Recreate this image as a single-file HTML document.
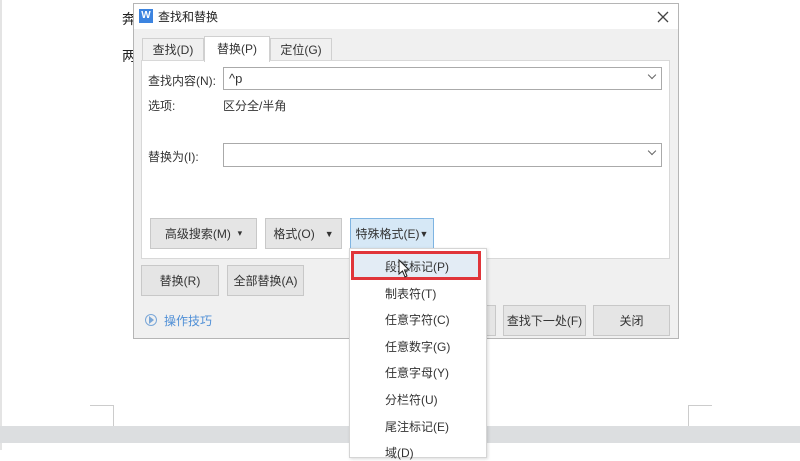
<!DOCTYPE html>
<html><head><meta charset="utf-8"><style>
*{margin:0;padding:0;box-sizing:border-box}
body{width:800px;height:450px;overflow:hidden;background:#fff;position:relative;font-family:"Liberation Sans","Noto Sans CJK SC",sans-serif;font-size:12px;color:#333}
.a{position:absolute}
.btn{position:absolute;background:#e5e5e5;border:1px solid #c8c8c8;display:flex;align-items:center;justify-content:center;color:#333;font-size:12px}
.inp{position:absolute;background:#fff;border:1px solid #aaa}
.chev{position:absolute;right:6px;top:4px;width:6px;height:6px;border-right:1.3px solid #666;border-bottom:1.3px solid #666;transform:rotate(45deg)}
.mi{position:absolute;left:35px;font-size:12px;color:#333}
</style></head><body>
<div class="a" style="left:0;top:0;width:2px;height:450px;background:#e4e4e4"></div>
<div class="a" style="left:122px;top:9px;font-size:14px;color:#222">奔</div>
<div class="a" style="left:122px;top:46px;font-size:14px;color:#222">两</div>
<div class="a" style="left:90px;top:405px;width:24px;height:21px;border-top:1px solid #ccc;border-right:1px solid #ccc"></div>
<div class="a" style="left:688px;top:405px;width:24px;height:21px;border-top:1px solid #ccc;border-left:1px solid #ccc"></div>
<div class="a" style="left:0;top:426px;width:800px;height:17px;background:#dcdee0"></div>

<!-- dialog -->
<div class="a" style="left:133px;top:3px;width:546px;height:336px;background:#f0f0f0;border:1px solid #b5b5b5">
  <div class="a" style="left:0;top:0;width:544px;height:25px;background:#fff"></div>
  <div class="a" style="left:5px;top:5px;width:14px;height:14px;background:#3c84e0;color:#fff;font-size:10px;line-height:14px;text-align:center;font-weight:bold">W</div>
  <div class="a" style="left:24px;top:4px;font-size:12px;color:#222">查找和替换</div>
  <svg class="a" style="left:523px;top:7px" width="12" height="12" viewBox="0 0 12 12"><path d="M1 1 L11 11 M11 1 L1 11" stroke="#444" stroke-width="1.3"/></svg>
  <!-- tabs -->
  <div class="a" style="left:8px;top:34px;width:62px;height:23px;border:1px solid #d0d0d0;border-bottom:none;background:#f0f0f0;text-align:center;line-height:22px">查找(D)</div>
  <div class="a" style="left:70px;top:32px;width:66px;height:26px;border:1px solid #d0d0d0;border-bottom:none;background:#fff;text-align:center;line-height:24px;z-index:2">替换(P)</div>
  <div class="a" style="left:136px;top:34px;width:62px;height:23px;border:1px solid #d0d0d0;border-bottom:none;background:#f0f0f0;text-align:center;line-height:22px">定位(G)</div>
  <div class="a" style="left:7px;top:56px;width:529px;height:199px;background:#fff;border:1px solid #d8d8d8"></div>
  <div class="a" style="left:14px;top:68px">查找内容(N):</div>
  <div class="inp" style="left:89px;top:63px;width:439px;height:23px"><span style="position:absolute;left:5px;top:3px;font-size:13px">^p</span><div class="chev"></div></div>
  <div class="a" style="left:14px;top:93px">选项:</div>
  <div class="a" style="left:89px;top:93px">区分全/半角</div>
  <div class="a" style="left:14px;top:144px">替换为(I):</div>
  <div class="inp" style="left:89px;top:139px;width:439px;height:24px"><div class="chev"></div></div>
  <div class="btn" style="left:16px;top:214px;width:107px;height:31px">高级搜索(M)&nbsp;&nbsp;<span style="font-size:9px">▾</span></div>
  <div class="btn" style="left:131px;top:214px;width:77px;height:31px">格式(O)&nbsp;&nbsp;&nbsp;<span style="font-size:9px">▼</span></div>
  <div class="btn" style="left:216px;top:214px;width:84px;height:31px;background:#d6e8f6;border-color:#7eb4e2">特殊格式(E)<span style="font-size:9px">▼</span></div>
  <div class="btn" style="left:7px;top:261px;width:78px;height:31px">替换(R)</div>
  <div class="btn" style="left:93px;top:261px;width:77px;height:31px">全部替换(A)</div>
  <div class="a" style="left:11px;top:310px;width:12px;height:12px;border:1px solid #7aa7d8;border-radius:50%"></div>
  <div class="a" style="left:15px;top:312px;width:0;height:0;border-left:5px solid #7aa7d8;border-top:4px solid transparent;border-bottom:4px solid transparent"></div>
  <div class="a" style="left:30px;top:308px;color:#4f8fd6">操作技巧</div>
  <div class="btn" style="left:340px;top:301px;width:22px;height:31px">)</div>
  <div class="btn" style="left:369px;top:301px;width:83px;height:31px">查找下一处(F)</div>
  <div class="btn" style="left:459px;top:301px;width:77px;height:31px">关闭</div>
</div>

<!-- dropdown -->
<div class="a" style="left:349px;top:248px;width:138px;height:210px;background:#fff;border:1px solid #d5d5d5;box-shadow:1px 1px 3px rgba(0,0,0,.15)">
  <div class="a" style="left:1px;top:2px;width:130px;height:29px;background:#e3ecf5;border:3px solid #e0353a"></div>
  <div class="mi" style="top:9px">段落标记(P)</div>
  <div class="mi" style="top:36px">制表符(T)</div>
  <div class="mi" style="top:62px">任意字符(C)</div>
  <div class="mi" style="top:89px">任意数字(G)</div>
  <div class="mi" style="top:115px">任意字母(Y)</div>
  <div class="mi" style="top:142px">分栏符(U)</div>
  <div class="mi" style="top:169px">尾注标记(E)</div>
  <div class="mi" style="top:195px">域(D)</div>
</div>
<svg class="a" style="left:398px;top:259px" width="12" height="20" viewBox="0 0 12 20"><path d="M1 1 L1 15 L4.5 12 L7 18 L9 17 L6.5 11 L11 11 Z" fill="#fff" stroke="#222" stroke-width="1"/></svg>
</body></html>
